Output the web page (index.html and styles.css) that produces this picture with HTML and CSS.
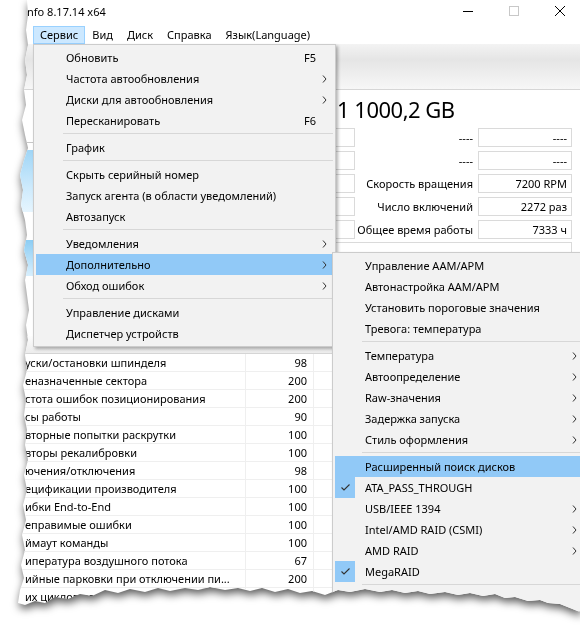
FILE: index.html
```html
<!DOCTYPE html>
<html lang="ru">
<head>
    <meta charset="UTF-8">
    <title>CrystalDiskInfo 8.17.14 x64</title>
    <link rel="stylesheet" href="styles.css">
</head>
<body>
<div class="sheet">
    <div class="paper">
        <div class="window">
            <div class="titlebar">
                <span class="title">nfo 8.17.14 x64</span>
                <div class="caption-buttons">
                    <span class="cap-btn"><svg width="10" height="10" viewBox="0 0 10 10"><line x1="0" y1="5.5" x2="10" y2="5.5" stroke="#000" stroke-width="1"/></svg></span>
                    <span class="cap-btn"><svg width="10" height="10" viewBox="0 0 10 10"><rect x="0.5" y="0.5" width="9" height="9" fill="none" stroke="#c8c8c8" stroke-width="1"/></svg></span>
                    <span class="cap-btn"><svg width="10" height="10" viewBox="0 0 10 10"><path d="M0 0 L10 10 M10 0 L0 10" stroke="#000" stroke-width="1"/></svg></span>
                </div>
            </div>

            <div class="menubar">
                <span class="menubar-item active">Сервис</span>
                <span class="menubar-item">Вид</span>
                <span class="menubar-item">Диск</span>
                <span class="menubar-item">Справка</span>
                <span class="menubar-item">Язык(Language)</span>
            </div>

            <div class="toolbar"></div>

            <div class="info">
                <div class="side">
                    <div class="side-top"></div>
                    <div class="health"></div>
                    <div class="temp"></div>
                </div>
                <div class="details">
                    <div class="model">1 1000,2 GB</div>
                    <div class="rows">
                        <div class="info-row"><span class="box"></span><span class="label">----</span><span class="value">----</span></div>
                        <div class="info-row"><span class="box"></span><span class="label">----</span><span class="value">----</span></div>
                        <div class="info-row"><span class="box"></span><span class="label">Скорость вращения</span><span class="value">7200 RPM</span></div>
                        <div class="info-row"><span class="box"></span><span class="label">Число включений</span><span class="value">2272 раз</span></div>
                        <div class="info-row"><span class="box"></span><span class="label">Общее время работы</span><span class="value">7333 ч</span></div>
                    </div>
                    <div class="features"></div>
                </div>
            </div>

            <div class="smart">
                <div class="smart-head"><span></span><span></span><span></span><span></span><span></span></div>
                <div class="smart-row"><span class="name">уски/остановки шпинделя</span><span class="num">98</span><span></span><span></span><span></span></div>
                <div class="smart-row"><span class="name">еназначенные сектора</span><span class="num">200</span><span></span><span></span><span></span></div>
                <div class="smart-row"><span class="name">стота ошибок позиционирования</span><span class="num">200</span><span></span><span></span><span></span></div>
                <div class="smart-row"><span class="name">сы работы</span><span class="num">90</span><span></span><span></span><span></span></div>
                <div class="smart-row"><span class="name">вторные попытки раскрутки</span><span class="num">100</span><span></span><span></span><span></span></div>
                <div class="smart-row"><span class="name">вторы рекалибровки</span><span class="num">100</span><span></span><span></span><span></span></div>
                <div class="smart-row"><span class="name">ючения/отключения</span><span class="num">98</span><span></span><span></span><span></span></div>
                <div class="smart-row"><span class="name">ецификации производителя</span><span class="num">100</span><span></span><span></span><span></span></div>
                <div class="smart-row"><span class="name">ибки End-to-End</span><span class="num">100</span><span></span><span></span><span></span></div>
                <div class="smart-row"><span class="name">еправимые ошибки</span><span class="num">100</span><span></span><span></span><span></span></div>
                <div class="smart-row"><span class="name">ймаут команды</span><span class="num">100</span><span></span><span></span><span></span></div>
                <div class="smart-row"><span class="name">ипература воздушного потока</span><span class="num">67</span><span></span><span></span><span></span></div>
                <div class="smart-row"><span class="name">ийные парковки при отключении пи...</span><span class="num">200</span><span></span><span></span><span></span></div>
                <div class="smart-row"><span class="name">их циклов парковки</span><span class="num">200</span><span></span><span></span><span></span></div>
            </div>

            <!-- Сервис dropdown -->
            <div class="menu main-menu">
                <div class="menu-item"><span></span><span>Обновить</span><span class="key">F5</span><span></span></div>
                <div class="menu-item"><span></span><span>Частота автообновления</span><span></span><span class="arrow"><svg width="5" height="8" viewBox="0 0 5 8"><polyline points="1,0.5 4,4 1,7.5" fill="none" stroke="#333" stroke-width="1"/></svg></span></div>
                <div class="menu-item"><span></span><span>Диски для автообновления</span><span></span><span class="arrow"><svg width="5" height="8" viewBox="0 0 5 8"><polyline points="1,0.5 4,4 1,7.5" fill="none" stroke="#333" stroke-width="1"/></svg></span></div>
                <div class="menu-item"><span></span><span>Пересканировать</span><span class="key">F6</span><span></span></div>
                <div class="menu-sep"></div>
                <div class="menu-item"><span></span><span>График</span><span></span><span></span></div>
                <div class="menu-sep"></div>
                <div class="menu-item"><span></span><span>Скрыть серийный номер</span><span></span><span></span></div>
                <div class="menu-item"><span></span><span>Запуск агента (в области уведомлений)</span><span></span><span></span></div>
                <div class="menu-item"><span></span><span>Автозапуск</span><span></span><span></span></div>
                <div class="menu-sep"></div>
                <div class="menu-item"><span></span><span>Уведомления</span><span></span><span class="arrow"><svg width="5" height="8" viewBox="0 0 5 8"><polyline points="1,0.5 4,4 1,7.5" fill="none" stroke="#333" stroke-width="1"/></svg></span></div>
                <div class="menu-item hl"><span></span><span>Дополнительно</span><span></span><span class="arrow"><svg width="5" height="8" viewBox="0 0 5 8"><polyline points="1,0.5 4,4 1,7.5" fill="none" stroke="#333" stroke-width="1"/></svg></span></div>
                <div class="menu-item"><span></span><span>Обход ошибок</span><span></span><span class="arrow"><svg width="5" height="8" viewBox="0 0 5 8"><polyline points="1,0.5 4,4 1,7.5" fill="none" stroke="#333" stroke-width="1"/></svg></span></div>
                <div class="menu-sep"></div>
                <div class="menu-item"><span></span><span>Управление дисками</span><span></span><span></span></div>
                <div class="menu-item"><span></span><span>Диспетчер устройств</span><span></span><span></span></div>
            </div>

            <!-- Дополнительно submenu -->
            <div class="menu sub-menu">
                <div class="menu-item"><span></span><span>Управление AAM/APM</span><span></span><span></span></div>
                <div class="menu-item"><span></span><span>Автонастройка AAM/APM</span><span></span><span></span></div>
                <div class="menu-item"><span></span><span>Установить пороговые значения</span><span></span><span></span></div>
                <div class="menu-item"><span></span><span>Тревога: температура</span><span></span><span></span></div>
                <div class="menu-sep"></div>
                <div class="menu-item"><span></span><span>Температура</span><span></span><span class="arrow"><svg width="5" height="8" viewBox="0 0 5 8"><polyline points="1,0.5 4,4 1,7.5" fill="none" stroke="#333" stroke-width="1"/></svg></span></div>
                <div class="menu-item"><span></span><span>Автоопределение</span><span></span><span class="arrow"><svg width="5" height="8" viewBox="0 0 5 8"><polyline points="1,0.5 4,4 1,7.5" fill="none" stroke="#333" stroke-width="1"/></svg></span></div>
                <div class="menu-item"><span></span><span>Raw-значения</span><span></span><span class="arrow"><svg width="5" height="8" viewBox="0 0 5 8"><polyline points="1,0.5 4,4 1,7.5" fill="none" stroke="#333" stroke-width="1"/></svg></span></div>
                <div class="menu-item"><span></span><span>Задержка запуска</span><span></span><span class="arrow"><svg width="5" height="8" viewBox="0 0 5 8"><polyline points="1,0.5 4,4 1,7.5" fill="none" stroke="#333" stroke-width="1"/></svg></span></div>
                <div class="menu-item"><span></span><span>Стиль оформления</span><span></span><span class="arrow"><svg width="5" height="8" viewBox="0 0 5 8"><polyline points="1,0.5 4,4 1,7.5" fill="none" stroke="#333" stroke-width="1"/></svg></span></div>
                <div class="menu-sep"></div>
                <div class="menu-item hl"><span></span><span>Расширенный поиск дисков</span><span></span><span></span></div>
                <div class="menu-item"><span class="check"><svg width="9" height="7" viewBox="0 0 9 7"><polyline points="0.5,3.5 3,6 8.5,0.5" fill="none" stroke="#333" stroke-width="1.1"/></svg></span><span>ATA_PASS_THROUGH</span><span></span><span></span></div>
                <div class="menu-item"><span></span><span>USB/IEEE 1394</span><span></span><span class="arrow"><svg width="5" height="8" viewBox="0 0 5 8"><polyline points="1,0.5 4,4 1,7.5" fill="none" stroke="#333" stroke-width="1"/></svg></span></div>
                <div class="menu-item"><span></span><span>Intel/AMD RAID (CSMI)</span><span></span><span class="arrow"><svg width="5" height="8" viewBox="0 0 5 8"><polyline points="1,0.5 4,4 1,7.5" fill="none" stroke="#333" stroke-width="1"/></svg></span></div>
                <div class="menu-item"><span></span><span>AMD RAID</span><span></span><span class="arrow"><svg width="5" height="8" viewBox="0 0 5 8"><polyline points="1,0.5 4,4 1,7.5" fill="none" stroke="#333" stroke-width="1"/></svg></span></div>
                <div class="menu-item"><span class="check"><svg width="9" height="7" viewBox="0 0 9 7"><polyline points="0.5,3.5 3,6 8.5,0.5" fill="none" stroke="#333" stroke-width="1.1"/></svg></span><span>MegaRAID</span><span></span><span></span></div>
                <div class="menu-sep"></div>
                <div class="menu-item"><span></span><span>Показывать все диски</span><span></span><span></span></div>
            </div>
        </div>
    </div>
</div>
</body>
</html>
```

FILE: styles.css
```css
* {
    margin: 0;
    padding: 0;
    box-sizing: border-box;
}

body {
    background: #fff;
    font-family: "Segoe UI", "Noto Sans", sans-serif;
    font-size: 11px;
    color: #000;
}

/* torn screenshot piece */
.sheet {
    width: 580px;
    height: 628px;
    filter: drop-shadow(1px 4px 4px rgba(0, 0, 0, 0.65));
}

.paper {
    width: 580px;
    height: 628px;
    background: #fff;
    overflow: hidden;
    clip-path: polygon(27px 0, 580px 0, 580px 612px, 570px 608px, 560px 604px, 548px 603px, 540px 600px, 528px 601px, 515px 597px, 505px 598px, 495px 594px, 483px 596px, 470px 593px, 458px 595px, 445px 592px, 430px 594px, 418px 591px, 405px 593px, 392px 590px, 380px 592px, 365px 589px, 350px 592px, 338px 590px, 325px 595px, 312px 591px, 300px 593px, 288px 589px, 275px 592px, 262px 588px, 250px 591px, 238px 588px, 225px 590px, 210px 587px, 198px 590px, 185px 588px, 170px 591px, 158px 588px, 145px 592px, 130px 589px, 118px 593px, 105px 590px, 92px 596px, 80px 594px, 68px 599px, 55px 597px, 45px 603px, 35px 601px, 25px 605px, 18px 603px, 20px 590px, 24px 578px, 21px 565px, 25px 550px, 22px 535px, 26px 520px, 23px 505px, 27px 490px, 24px 475px, 28px 460px, 25px 445px, 27px 430px, 24px 415px, 26px 400px, 23px 385px, 27px 370px, 25px 355px, 28px 340px, 26px 325px, 29px 310px, 27px 295px, 25px 280px, 28px 265px, 24px 250px, 27px 235px, 25px 220px, 21px 205px, 23px 190px, 20px 175px, 24px 160px, 28px 148px, 25px 135px, 22px 120px, 26px 105px, 24px 90px, 27px 75px, 25px 60px, 28px 45px, 26px 30px, 28px 15px);
}

.window {
    position: relative;
    height: 100%;
}

.titlebar {
    height: 22px;
    display: flex;
    align-items: center;
    padding-left: 27px;
}

.title {
    flex: 1;
}

.caption-buttons {
    display: flex;
    margin-right: -3px;
}

.cap-btn {
    width: 46px;
    height: 22px;
    display: flex;
    align-items: center;
    justify-content: center;
}

.menubar {
    height: 22px;
    display: flex;
    align-items: flex-start;
    padding: 4px 0 0 33px;
}

.menubar-item {
    height: 18px;
    line-height: 16px;
    padding: 0 6px;
    border: 1px solid transparent;
}

.menubar-item.active {
    background: #cce8ff;
    border-color: #99d1ff;
}

.toolbar {
    height: 46px;
    background: linear-gradient(#f3f3f3, #e5e5e5 35%, #f7f7f7);
    border-bottom: 1px solid #d6d6d6;
}

.info {
    display: flex;
}

.side {
    width: 120px;
}

.side-top {
    height: 53px;
    border-bottom: 1px solid #c8c8c8;
}

.health {
    height: 62px;
    margin: 7px 4px 0 4px;
    border-radius: 4px;
    background: linear-gradient(#9fd5f6, #cdeafc 60%, #e6f5fe);
}

.temp {
    height: 36px;
    margin: 28px 4px 0 4px;
    border-radius: 18px;
    background: linear-gradient(#8ccdf4, #d8effd);
}

.details {
    flex: 1;
    padding-right: 8px;
}

.model {
    height: 37px;
    padding: 2px 0 0 217px;
    font-size: 22px;
    letter-spacing: -0.5px;
    line-height: 35px;
}

.rows {
    display: flex;
    flex-direction: column;
    gap: 4px;
    padding-top: 1px;
}

.info-row {
    display: flex;
    height: 19px;
    white-space: nowrap;
}

.box {
    width: 225px;
    margin-left: 10px;
    border: 1px solid #dadada;
}

.label {
    flex: 1;
    text-align: right;
    padding-right: 5px;
    line-height: 19px;
}

.value {
    width: 94px;
    border: 1px solid #dadada;
    text-align: right;
    padding-right: 4px;
    line-height: 17px;
}

.features {
    height: 88px;
    margin: 3px 0 0 10px;
    border: 1px solid #dadada;
}

.smart {
    margin-top: 6px;
    width: 560px;
}

.smart-head,
.smart-row {
    display: grid;
    grid-template-columns: 246px 68px 68px 68px 1fr;
    height: 18px;
}

.smart-head {
    background: linear-gradient(#fdfdfd, #ececec);
    border-bottom: 1px solid #d5d5d5;
}

.smart-row span {
    border-right: 1px solid #efefef;
    border-bottom: 1px solid #efefef;
    line-height: 17px;
    white-space: nowrap;
    overflow: hidden;
}

.smart-row .name {
    padding-left: 25px;
}

.smart-row .num {
    text-align: right;
    padding-right: 6px;
}

/* menus */
.menu {
    position: absolute;
    background: #f2f2f2;
    border: 1px solid #cccccc;
    padding: 2px;
    box-shadow: 2px 2px 3px rgba(0, 0, 0, 0.3);
}

.main-menu {
    left: 33px;
    top: 44px;
    width: 303px;
}

.sub-menu {
    left: 332px;
    top: 252px;
    width: 254px;
}

.menu-item {
    display: grid;
    grid-template-columns: 30px 1fr auto 17px;
    height: 21px;
    align-items: center;
    white-space: nowrap;
}

.menu-item.hl {
    background: #91c9f7;
}

.menu-item .arrow {
    display: flex;
    justify-content: center;
}

.menu-item .check {
    width: 20px;
    height: 21px;
    background: #91c9f7;
    display: flex;
    align-items: center;
    justify-content: center;
}

.menu-sep {
    height: 1px;
    margin: 2px 0 3px 27px;
    background: #d7d7d7;
}
```
